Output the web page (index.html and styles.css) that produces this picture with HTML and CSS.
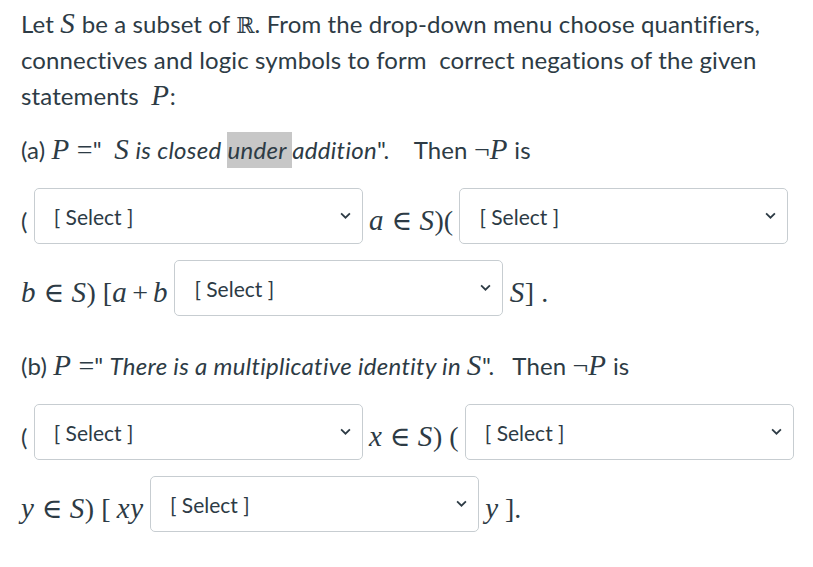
FILE: index.html
```html
<!DOCTYPE html>
<html lang="en">
<head>
    <meta charset="UTF-8">
    <meta name="viewport" content="width=device-width, initial-scale=1.0">
    <title>Negations of statements</title>
    <link rel="stylesheet" href="styles.css">
</head>
<body>
    <div class="question">
        <p>Let <span class="m">S</span> be a subset of <span class="bb">ℝ</span>. From the drop-down menu choose quantifiers, connectives and logic symbols to form&nbsp; correct negations of the given statements&nbsp; <span class="m">P</span>:</p>

        <p>(a) <span class="m">P</span><span class="up eq">=</span>"&nbsp; <span class="m">S</span> <em>is closed <span class="hl">under </span>addition</em>".&nbsp;&nbsp;&nbsp; Then <span class="up">¬</span><span class="m">P</span> is</p>

        <p class="row">( <span class="dd"><select><option>[ Select ]</option></select><svg class="chev" viewBox="0 0 10 6"><path d="M1 1l4 4 4-4" /></svg></span> <span class="m">a</span><span class="up rel">∈</span><span class="m">S</span><span class="up">)(</span> <span class="dd"><select><option>[ Select ]</option></select><svg class="chev" viewBox="0 0 10 6"><path d="M1 1l4 4 4-4" /></svg></span> <span class="m">b</span><span class="up rel">∈</span><span class="m">S</span><span class="up">) [</span><span class="m">a</span><span class="up bin">+</span><span class="m">b</span> <span class="dd"><select><option>[ Select ]</option></select><svg class="chev" viewBox="0 0 10 6"><path d="M1 1l4 4 4-4" /></svg></span> <span class="m">S</span><span class="up">] .</span></p>

        <p>(b) <span class="m">P</span><span class="up eq">=</span>" <em>There is a multiplicative identity in <span class="m">S</span></em>".&nbsp;&nbsp; Then <span class="up">¬</span><span class="m">P</span> is</p>

        <p class="row">( <span class="dd"><select><option>[ Select ]</option></select><svg class="chev" viewBox="0 0 10 6"><path d="M1 1l4 4 4-4" /></svg></span> <span class="m">x</span><span class="up rel">∈</span><span class="m">S</span><span class="up">) (</span> <span class="dd"><select><option>[ Select ]</option></select><svg class="chev" viewBox="0 0 10 6"><path d="M1 1l4 4 4-4" /></svg></span> <span class="m">y</span><span class="up rel">∈</span><span class="m">S</span><span class="up">) [</span> <span class="m">xy</span> <span class="dd"><select><option>[ Select ]</option></select><svg class="chev" viewBox="0 0 10 6"><path d="M1 1l4 4 4-4" /></svg></span> <span class="m">y</span> <span class="up">].</span></p>
    </div>
</body>
</html>
```

FILE: styles.css
```css
body {
    margin: 0;
    font-family: Lato, "Noto Sans", sans-serif;
    color: #2d3b45;
    background: #fff;
}
.question {
    padding: 6px 0 0 21px;
}
.question p {
    margin: 0 0 18px;
    font-size: 24px;
    line-height: 36px;
    letter-spacing: 0.12px;
}
.question em {
    letter-spacing: 0.3px;
}
.m {
    font-family: "Liberation Serif", "DejaVu Serif", serif;
    font-style: italic;
    font-size: 29px;
    line-height: 1;
    letter-spacing: 0.6px;
}
.up {
    font-family: "Liberation Serif", "DejaVu Serif", serif;
    font-size: 28px;
    line-height: 1;
    letter-spacing: 0;
}
.eq {
    margin-left: 0.25em;
}
.rel {
    margin: 0 0.26em;
}
.bin {
    margin: 0 0.18em;
}
.bb {
    font-family: "DejaVu Serif", serif;
    font-size: 22px;
    line-height: 1;
}
.hl {
    background-color: #c7c7c7;
    padding: 3px 0 4px;
}
.dd {
    display: inline-block;
    position: relative;
    overflow: hidden;
    vertical-align: -28px;
    margin: 2px 0 14px;
}
.dd select {
    display: block;
    width: 329px;
    height: 56px;
    padding: 0 30px 0 19px;
    border: 1px solid #c7cdd1;
    border-radius: 5px;
    background: #fff;
    font-family: Lato, "Noto Sans", sans-serif;
    font-size: 21px;
    color: #2d3b45;
    appearance: none;
    -webkit-appearance: none;
}
.chev {
    position: absolute;
    right: 12px;
    top: 24px;
    width: 11px;
    height: 7px;
    fill: none;
    stroke: #2d3b45;
    stroke-width: 1.6;
}
```
